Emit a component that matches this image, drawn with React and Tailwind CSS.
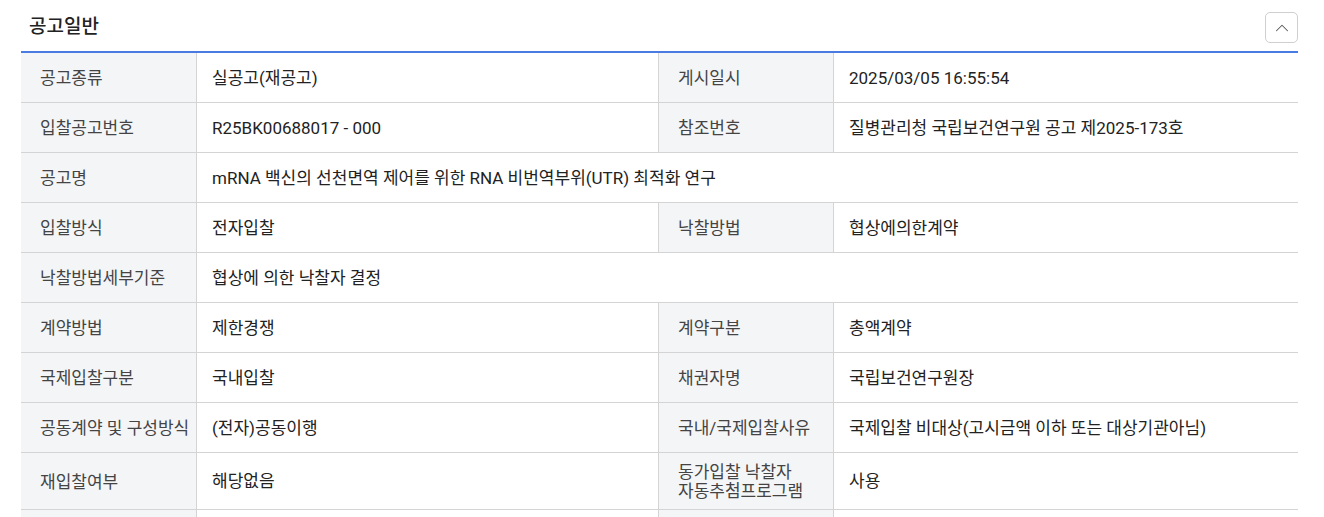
import React from "react";
import { ChevronUp } from "lucide-react";

const rows = [
  ["공고종류", "실공고(재공고)", "게시일시", "2025/03/05 16:55:54"],
  ["입찰공고번호", "R25BK00688017 - 000", "참조번호", "질병관리청 국립보건연구원 공고 제2025-173호"],
  ["공고명", "mRNA 백신의 선천면역 제어를 위한 RNA 비번역부위(UTR) 최적화 연구"],
  ["입찰방식", "전자입찰", "낙찰방법", "협상에의한계약"],
  ["낙찰방법세부기준", "협상에 의한 낙찰자 결정"],
  ["계약방법", "제한경쟁", "계약구분", "총액계약"],
  ["국제입찰구분", "국내입찰", "채권자명", "국립보건연구원장"],
  ["공동계약 및 구성방식", "(전자)공동이행", "국내/국제입찰사유", "국제입찰 비대상(고시금액 이하 또는 대상기관아님)"],
  ["재입찰여부", "해당없음", "동가입찰 낙찰자\n자동추첨프로그램", "사용"],
  ["", "", "", ""],
];

const Label = ({ children }) => (
  <div className="bg-[#f4f5f7] border-r border-[#d4d4d4] flex items-center min-h-[49px] pt-[10px] pb-[8px] pl-[19px] text-[#444] whitespace-pre leading-[19px]">
    {children}
  </div>
);

const Value = ({ children, last, span }) => (
  <div
    className={`flex items-center pt-[2px] pl-[15px] pr-2 text-[#222] ${
      last ? "" : "border-r border-[#d4d4d4]"
    } ${span ? "col-span-3" : ""}`}
  >
    {children}
  </div>
);

export default function App() {
  return (
    <div
      className="bg-white w-full pl-[21px] pr-[26px] text-[17px]"
      style={{ fontFamily: "Roboto, 'Noto Sans CJK KR', sans-serif" }}
    >
      <div className="flex items-center justify-between pt-[12px] pb-[8px]">
        <h2 className="pl-2 text-[19px] font-medium text-[#222]">공고일반</h2>
        <button className="w-[33px] h-[31px] border border-[#cfcfcf] rounded-[5px] flex items-center justify-center text-[#555]">
          <ChevronUp size={22} strokeWidth={1.1} />
        </button>
      </div>
      <div className="border-t-2 border-[#4a7be3]">
        {rows.map((r, i) => {
          const full = r.length === 2;
          return (
            <div
              key={i}
              className="grid grid-cols-[176px_462px_175px_1fr] border-b border-[#d4d4d4]"
            >
              <Label>{r[0]}</Label>
              {full ? (
                <Value span last>
                  {r[1]}
                </Value>
              ) : (
                <>
                  <Value>{r[1]}</Value>
                  <Label>{r[2]}</Label>
                  <Value last>{r[3]}</Value>
                </>
              )}
            </div>
          );
        })}
      </div>
    </div>
  );
}
